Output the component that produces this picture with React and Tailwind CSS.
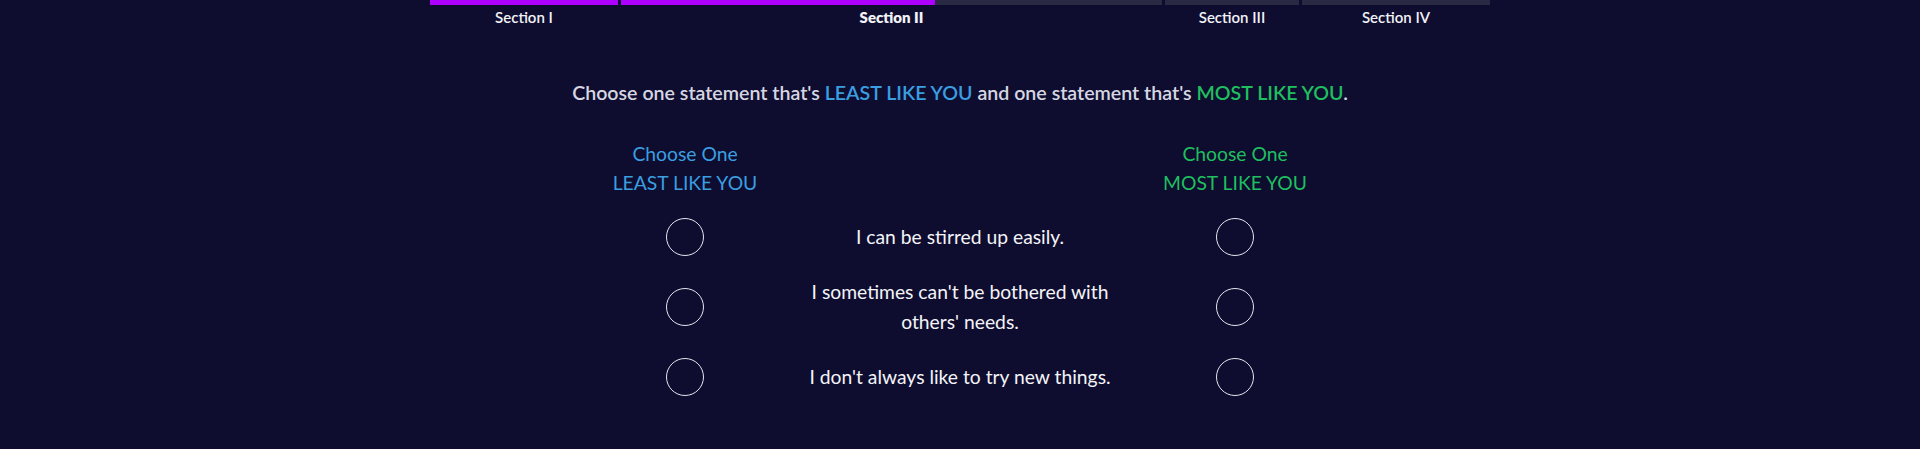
import React, { useState } from 'react';

const sections = [
    { name: 'Section I', width: 'w-[188px]', fill: 'w-full', bold: false },
    { name: 'Section II', width: 'w-[541px]', fill: 'w-[58%]', bold: true },
    { name: 'Section III', width: 'w-[134px]', fill: 'w-0', bold: false },
    { name: 'Section IV', width: 'w-[188px]', fill: 'w-0', bold: false },
];

const statements = [
    { id: 1, text: "I can be stirred up easily." },
    { id: 2, text: "I sometimes can't be bothered with others' needs." },
    { id: 3, text: "I don't always like to try new things." },
];

const Radio = ({ checked, onClick, color }) => (
    <button
        onClick={onClick}
        className={`w-[38px] h-[38px] rounded-full border border-[#e6e6ee] ${checked ? color : 'bg-transparent'}`}
    />
);

const App = () => {
    const [least, setLeast] = useState(null);
    const [most, setMost] = useState(null);

    return (
        <div className="min-h-screen w-full bg-[#0e0d2f] text-white" style={{ fontFamily: 'Lato, "Open Sans", sans-serif' }}>
            {/* barre de progression */}
            <div className="flex w-[1060px] mx-auto gap-[3px]">
                {sections.map((s) => (
                    <div key={s.name} className={`${s.width} flex flex-col`}>
                        <div className="h-[5px] bg-[#2a2944]">
                            <div className={`h-full bg-[#ad00ff] ${s.fill}`} />
                        </div>
                        <div className={`text-center text-[15px] leading-[20px] mt-[2px] text-[#f2f2f8] ${s.bold ? 'font-extrabold' : 'font-semibold'}`}>
                            {s.name}
                        </div>
                    </div>
                ))}
            </div>

            <main className="mt-[52px]">
                <h2 className="text-center text-[19.6px] leading-[28px] font-semibold text-[#d6d6e2]">
                    Choose one statement that's <span className="text-[#3a9ee0]">LEAST LIKE YOU</span> and one statement that's <span className="text-[#1fbf5f]">MOST LIKE YOU</span>.
                </h2>

                <div className="flex justify-center mt-[32px]">
                    <div className="w-[230px] text-center text-[19.3px] leading-[29px] text-[#3a9ee0]">
                        <div>Choose One</div>
                        <div>LEAST LIKE YOU</div>
                    </div>
                    <div className="w-[320px]" />
                    <div className="w-[230px] text-center text-[19.3px] leading-[29px] text-[#1fbf5f]">
                        <div>Choose One</div>
                        <div>MOST LIKE YOU</div>
                    </div>
                </div>

                <div className="mt-[5px]">
                    {statements.map((st) => (
                        <div key={st.id} className="flex justify-center items-center h-[70px]">
                            <div className="w-[230px] flex justify-center">
                                <Radio checked={least === st.id} onClick={() => setLeast(st.id)} color="bg-[#3a9ee0]" />
                            </div>
                            <div className="w-[320px] px-[4px] text-center text-[19.3px] leading-[30px] text-[#f4f4f8]">
                                {st.text}
                            </div>
                            <div className="w-[230px] flex justify-center">
                                <Radio checked={most === st.id} onClick={() => setMost(st.id)} color="bg-[#1fbf5f]" />
                            </div>
                        </div>
                    ))}
                </div>
            </main>
        </div>
    );
};

export default App;
